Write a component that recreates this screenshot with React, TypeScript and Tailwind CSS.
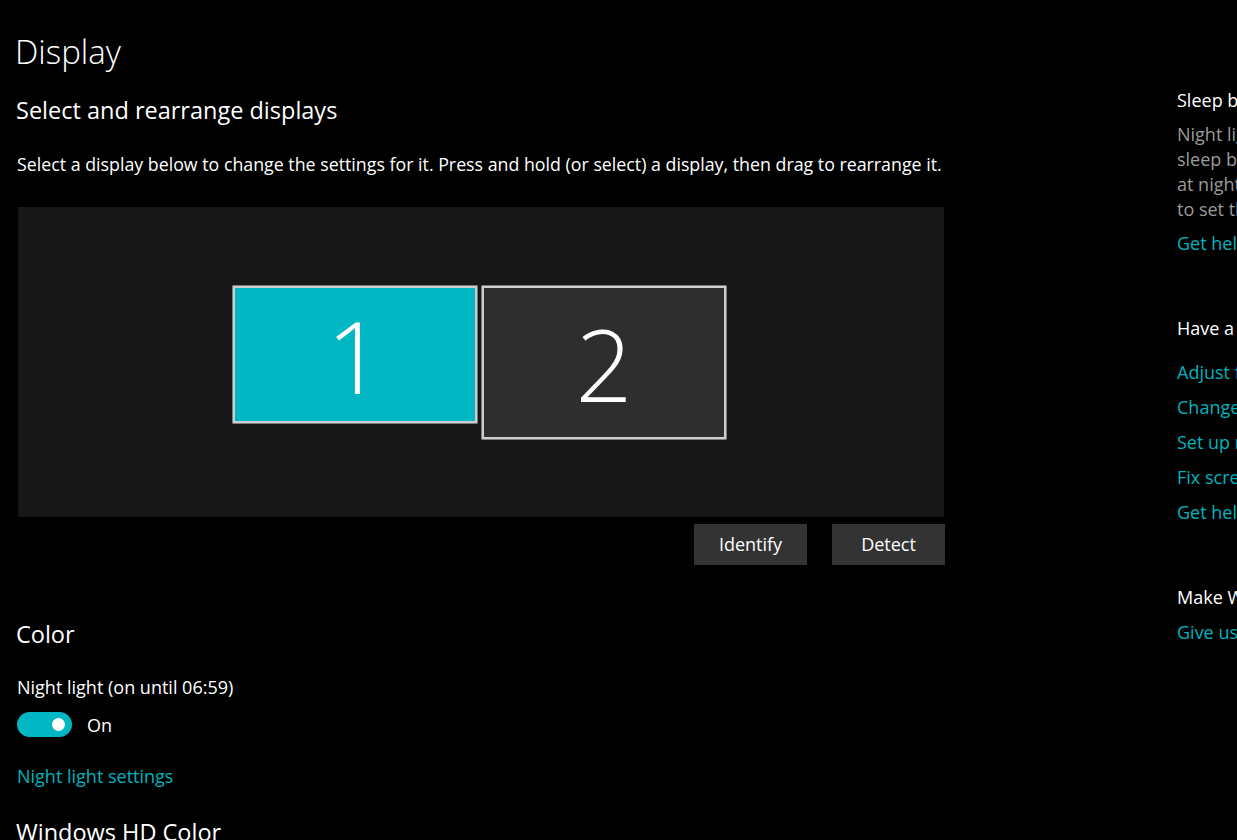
const font = { fontFamily: '"Segoe UI", "Open Sans", "Noto Sans", sans-serif' };

function Toggle() {
  return (
    <div className="flex h-[25px] items-center gap-[15px]">
      <div className="relative h-[25px] w-[55px] rounded-full bg-[#00b7c3]">
        <div className="absolute right-[7px] top-[6px] h-[13px] w-[13px] rounded-full bg-white" />
      </div>
      <span className="text-[18px] leading-[22px] text-white">On</span>
    </div>
  );
}

function Monitor({ n, active, h }: { n: string; active?: boolean; h: string }) {
  return (
    <div className={`rounded-[1px] border border-[#7c7c7c] ${h}`}>
      <div
        className={`flex h-full w-[244px] items-center justify-center border-2 border-[#cdcdcd] ${
          active ? "bg-[#00b7c3]" : "bg-[#2e2e2e]"
        }`}
      >
        <span className="text-[100px] font-light leading-none text-white">{n}</span>
      </div>
    </div>
  );
}

const helpLinks = [
  "Adjust font size",
  "Change brightness automatically or use night light",
  "Set up multiple monitors",
  "Fix screen flickering",
  "Get help",
];

export default function App() {
  return (
    <div className="flex h-[840px] w-[1237px] overflow-hidden bg-black text-white" style={font}>
      <main className="w-[1177px] shrink-0 pl-[15px]">
        <h1 className="mt-[32px] text-[33px] font-light leading-[40px]">Display</h1>
        <h2 className="mt-[22px] pl-[1px] text-[23.5px] leading-[32px]">Select and rearrange displays</h2>
        <p className="mt-[27px] pl-[2px] text-[17.8px] leading-[22px]">
          Select a display below to change the settings for it. Press and hold (or select) a display, then drag to
          rearrange it.
        </p>

        <div className="ml-[3px] mt-[32px] flex h-[310px] w-[926px] items-start gap-[3px] bg-[#171717] pl-[214px] pt-[78px]">
          <Monitor n="1" active h="h-[139px]" />
          <Monitor n="2" h="h-[155px]" />
        </div>

        <div className="mt-[7px] flex w-[930px] justify-end gap-[25px]">
          <button className="h-[41px] w-[113px] bg-[#333333] text-[18px] text-white">Identify</button>
          <button className="h-[41px] w-[113px] bg-[#333333] text-[18px] text-white">Detect</button>
        </div>

        <h2 className="mt-[53px] pl-[1px] text-[23.5px] leading-[32px]">Color</h2>
        <div className="mt-[26px] pl-[2px] text-[18px] leading-[22px]">Night light (on until 06:59)</div>
        <div className="mt-[14px] pl-[2px]">
          <Toggle />
        </div>
        <a className="mt-[28px] block pl-[2px] text-[18px] leading-[22px] text-[#00b3bf]">Night light settings</a>
        <h2 className="mt-[29px] pl-[1px] text-[23.5px] leading-[32px]">Windows HD Color</h2>
      </main>

      <aside className="min-w-0 flex-1 overflow-hidden whitespace-nowrap text-[18px]">
        <div className="mt-[88px] leading-[25px]">Sleep better</div>
        <div className="mt-[9px] leading-[25px] text-[#9a9a9a]">
          <div>Night light can help you get to</div>
          <div>sleep by displaying warmer colors</div>
          <div>at night. Select Night light settings</div>
          <div>to set things up.</div>
        </div>
        <a className="mt-[9px] block leading-[25px] text-[#00b3bf]">Get help setting it up</a>

        <div className="mt-[60px] leading-[25px]">Have a question?</div>
        <ul className="mt-[19px] flex flex-col gap-[10px]">
          {helpLinks.map((l) => (
            <li key={l} className="leading-[25px] text-[#00b3bf]">
              {l}
            </li>
          ))}
        </ul>

        <div className="mt-[60px] leading-[25px]">Make Windows better</div>
        <a className="mt-[10px] block leading-[25px] text-[#00b3bf]">Give us feedback</a>
      </aside>
    </div>
  );
}
